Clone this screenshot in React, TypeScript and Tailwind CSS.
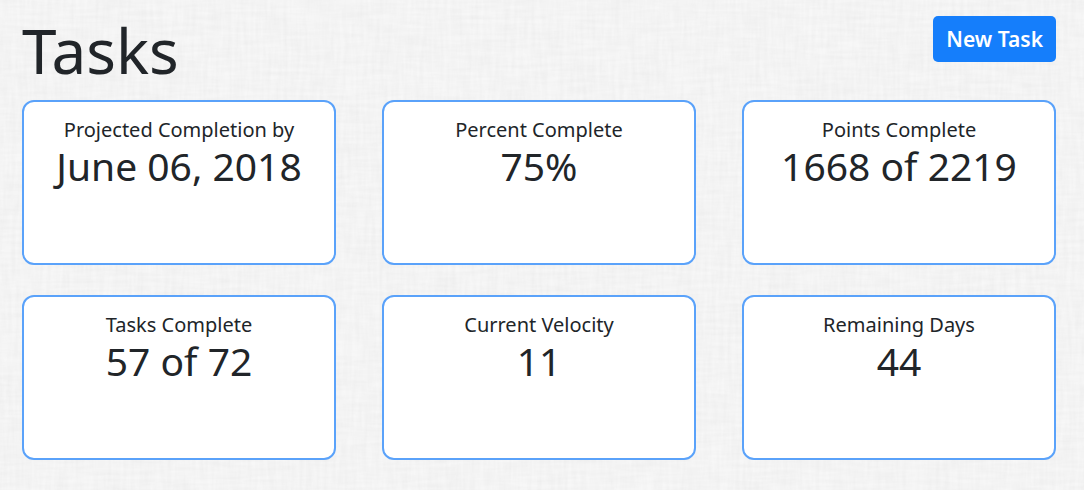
type Stat = { label: string; value: string };

const stats: Stat[] = [
  { label: "Projected Completion by", value: "June 06, 2018" },
  { label: "Percent Complete", value: "75%" },
  { label: "Points Complete", value: "1668 of 2219" },
  { label: "Tasks Complete", value: "57 of 72" },
  { label: "Current Velocity", value: "11" },
  { label: "Remaining Days", value: "44" },
];

// Woven linen texture: stretched noise in both directions.
function LinenTexture() {
  return (
    <svg aria-hidden="true" className="pointer-events-none absolute inset-0 -z-10 h-full w-full">
      <filter id="weft" x="0" y="0" width="100%" height="100%" colorInterpolationFilters="sRGB">
        <feTurbulence type="fractalNoise" baseFrequency="0.03 0.25" numOctaves="2" seed="4" />
        <feColorMatrix values="0 0 0 0 0  0 0 0 0 0  0 0 0 0 0  0.035 0 0 0 -0.01" />
      </filter>
      <filter id="warp" x="0" y="0" width="100%" height="100%" colorInterpolationFilters="sRGB">
        <feTurbulence type="fractalNoise" baseFrequency="0.25 0.03" numOctaves="2" seed="9" />
        <feColorMatrix values="0 0 0 0 0  0 0 0 0 0  0 0 0 0 0  0.035 0 0 0 -0.01" />
      </filter>
      <rect width="100%" height="100%" filter="url(#weft)" />
      <rect width="100%" height="100%" filter="url(#warp)" />
    </svg>
  );
}

function StatCard({ label, value }: Stat) {
  return (
    <section className="min-h-[165px] rounded-xl border-2 border-[#5aa2fa] bg-white px-4 pt-4 pb-4 text-center">
      <h2 className="text-xl leading-6">{label}</h2>
      <p className="text-[39px] leading-12">{value}</p>
    </section>
  );
}

export default function App() {
  return (
    <main className="relative isolate min-h-screen bg-[#f7f7f7] pr-7 pb-7 pl-[22px] font-['Noto_Sans',sans-serif] text-[#212529]">
      <LinenTexture />
      <header className="flex items-start justify-between pt-4">
        <h1 className="h-[84px] text-[62px] leading-[68px]">Tasks</h1>
        <button
          type="button"
          className="h-[46px] rounded-[5px] bg-[#157efb] px-[13px] text-[21px] leading-7 font-semibold text-white"
        >
          New Task
        </button>
      </header>
      <div className="grid grid-cols-3 gap-x-[46px] gap-y-[30px]">
        {stats.map((stat) => (
          <StatCard key={stat.label} label={stat.label} value={stat.value} />
        ))}
      </div>
    </main>
  );
}
